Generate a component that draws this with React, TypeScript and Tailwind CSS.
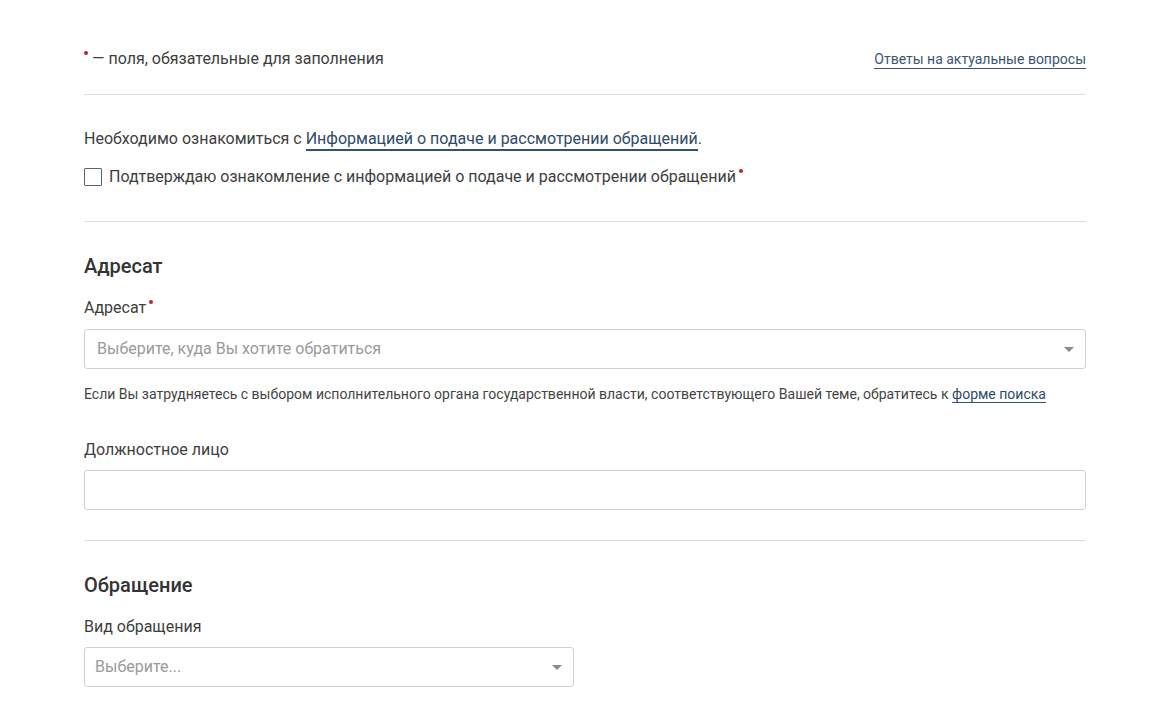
import React from "react";

const Req = () => (
  <span className="relative -top-[7px] ml-[3px] inline-block h-[4px] w-[4px] rounded-full bg-[#b3262b] align-middle" />
);

const Divider = () => <div className="h-px w-full bg-[#dcdcdc]" />;

const Caret = () => (
  <svg width="10" height="5" viewBox="0 0 10 5" className="shrink-0">
    <path d="M0 0h10L5 5z" fill="#8a8a8a" />
  </svg>
);

const SelectBox: React.FC<{ placeholder: string; className?: string; padLeft?: string }> = ({
  placeholder,
  className,
  padLeft = "pl-[12px]"
}) => (
  <div
    className={`flex h-[40px] items-center justify-between rounded-[3px] border border-[#cfcfcf] bg-white ${padLeft} pr-[11px] ${className ?? ""}`}
  >
    <span className="text-[16px] text-[#9a9a9a]">{placeholder}</span>
    <Caret />
  </div>
);

export default function App() {
  return (
    <div className="min-h-[701px] w-full bg-white font-['Roboto',sans-serif] text-[#3e3e3e]">
      <div className="ml-[84px] w-[1002px] pt-[48px]">
        <div className="flex items-center justify-between pb-[24px]">
          <div className="text-[16px] leading-[22px]">
            <span className="relative -top-[7px] mr-[4px] inline-block h-[4px] w-[4px] rounded-full bg-[#b3262b] align-middle" />
            — поля, обязательные для заполнения
          </div>
          <a className="border-b border-[#3c5472] text-[14px] leading-[18px] text-[#3c5472]">
            Ответы на актуальные вопросы
          </a>
        </div>
        <Divider />

        <div className="pt-[33px] text-[16px] leading-[22px]">
          Необходимо ознакомиться с{" "}
          <a className="border-b-2 border-[#34506e] pb-[1px] text-[#2e4a68]">
            Информацией о подаче и рассмотрении обращений
          </a>
          .
        </div>
        <label className="mt-[16px] flex items-center gap-[7px] text-[16px] leading-[22px]">
          <span className="h-[18px] w-[18px] rounded-[1px] border border-[#5a6470] bg-white" />
          <span>
            Подтверждаю ознакомление с информацией о подаче и рассмотрении обращений
            <Req />
          </span>
        </label>
        <div className="pt-[33px]">
          <Divider />
        </div>

        <h2 className="pt-[31px] text-[20px] leading-[26px] font-medium text-[#333]">Адресат</h2>
        <div className="pt-[18px] text-[16px] leading-[22px]">
          Адресат
          <Req />
        </div>
        <SelectBox className="mt-[10px]" placeholder="Выберите, куда Вы хотите обратиться" />
        <div className="pt-[15px] text-[14px] leading-[20px] text-[#444]">
          Если Вы затрудняетесь с выбором исполнительного органа государственной власти, соответствующего Вашей теме, обратитесь к{" "}
          <a className="border-b border-[#34506e] text-[#2e4a68]">форме поиска</a>
        </div>

        <div className="pt-[35px] text-[16px] leading-[22px]">Должностное лицо</div>
        <div className="mt-[9px] h-[40px] rounded-[3px] border border-[#cfcfcf] bg-white" />
        <div className="pt-[30px]">
          <Divider />
        </div>

        <h2 className="pt-[31px] text-[20px] leading-[26px] font-medium text-[#333]">Обращение</h2>
        <div className="pt-[18px] text-[16px] leading-[22px]">Вид обращения</div>
        <SelectBox className="mt-[9px] w-[490px]" padLeft="pl-[10px]" placeholder="Выберите..." />
      </div>
    </div>
  );
}
